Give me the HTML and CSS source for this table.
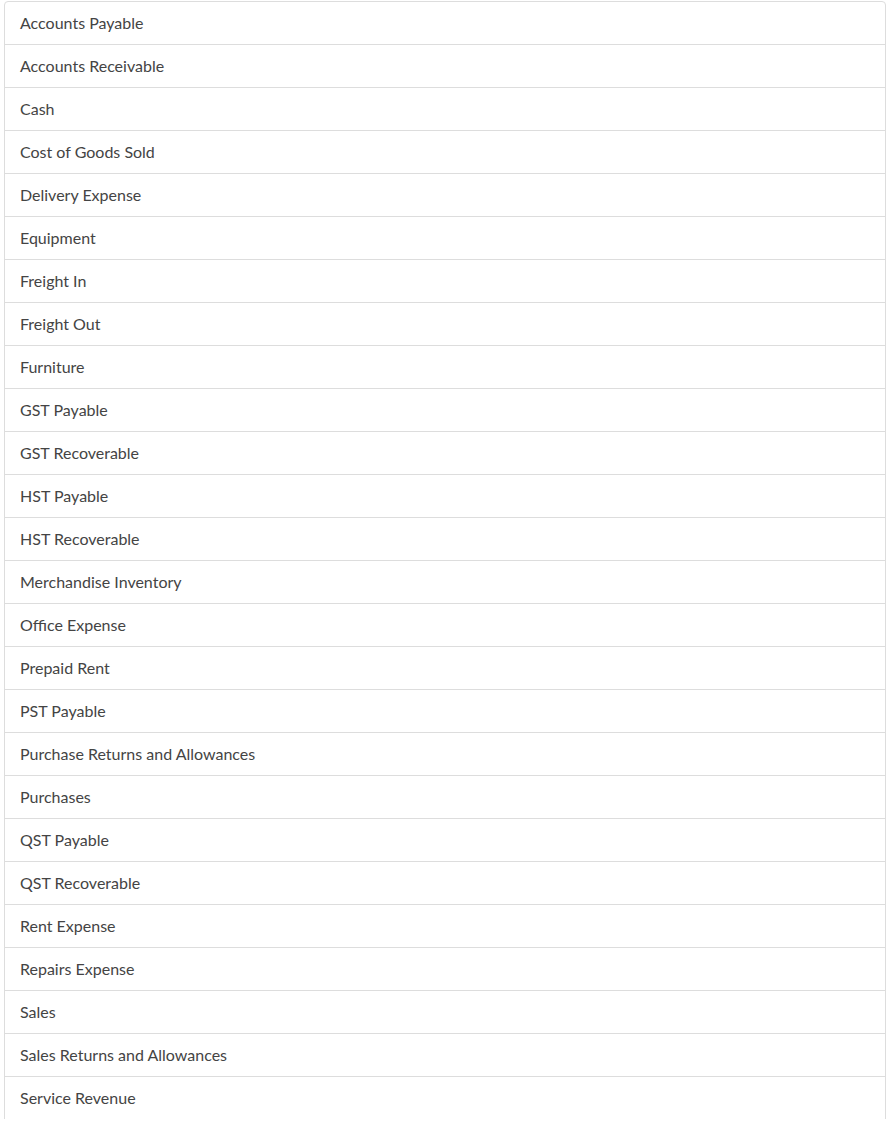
FILE: index.html
```html
<!DOCTYPE html>
<html lang="en">
<head>
    <meta charset="UTF-8">
    <title>Accounts</title>
    <link rel="stylesheet" href="styles.css">
</head>
<body>
    <!-- Account list -->
    <ul class="accountList">
        <li class="accountItem">Accounts Payable</li>
        <li class="accountItem">Accounts Receivable</li>
        <li class="accountItem">Cash</li>
        <li class="accountItem">Cost of Goods Sold</li>
        <li class="accountItem">Delivery Expense</li>
        <li class="accountItem">Equipment</li>
        <li class="accountItem">Freight In</li>
        <li class="accountItem">Freight Out</li>
        <li class="accountItem">Furniture</li>
        <li class="accountItem">GST Payable</li>
        <li class="accountItem">GST Recoverable</li>
        <li class="accountItem">HST Payable</li>
        <li class="accountItem">HST Recoverable</li>
        <li class="accountItem">Merchandise Inventory</li>
        <li class="accountItem">Office Expense</li>
        <li class="accountItem">Prepaid Rent</li>
        <li class="accountItem">PST Payable</li>
        <li class="accountItem">Purchase Returns and Allowances</li>
        <li class="accountItem">Purchases</li>
        <li class="accountItem">QST Payable</li>
        <li class="accountItem">QST Recoverable</li>
        <li class="accountItem">Rent Expense</li>
        <li class="accountItem">Repairs Expense</li>
        <li class="accountItem">Sales</li>
        <li class="accountItem">Sales Returns and Allowances</li>
        <li class="accountItem">Service Revenue</li>
    </ul>
</body>
</html>
```
FILE: styles.css
```css
/* Base page */
body {
    margin: 0;
    padding: 1px 7px 0 4px;
    background: #fff;
    font-family: 'Lato', 'Liberation Sans', sans-serif;
    font-size: 16px;
    color: #444;
}

/* List container */
.accountList {
    list-style: none;
    margin: 0;
    padding: 0;
}

/* Single row */
.accountItem {
    padding: 10px 15px;
    line-height: 22px;
    background: #fff;
    border: 1px solid #ddd;
    margin-bottom: -1px;
}

.accountItem:first-child {
    border-top-left-radius: 4px;
    border-top-right-radius: 4px;
}
```
